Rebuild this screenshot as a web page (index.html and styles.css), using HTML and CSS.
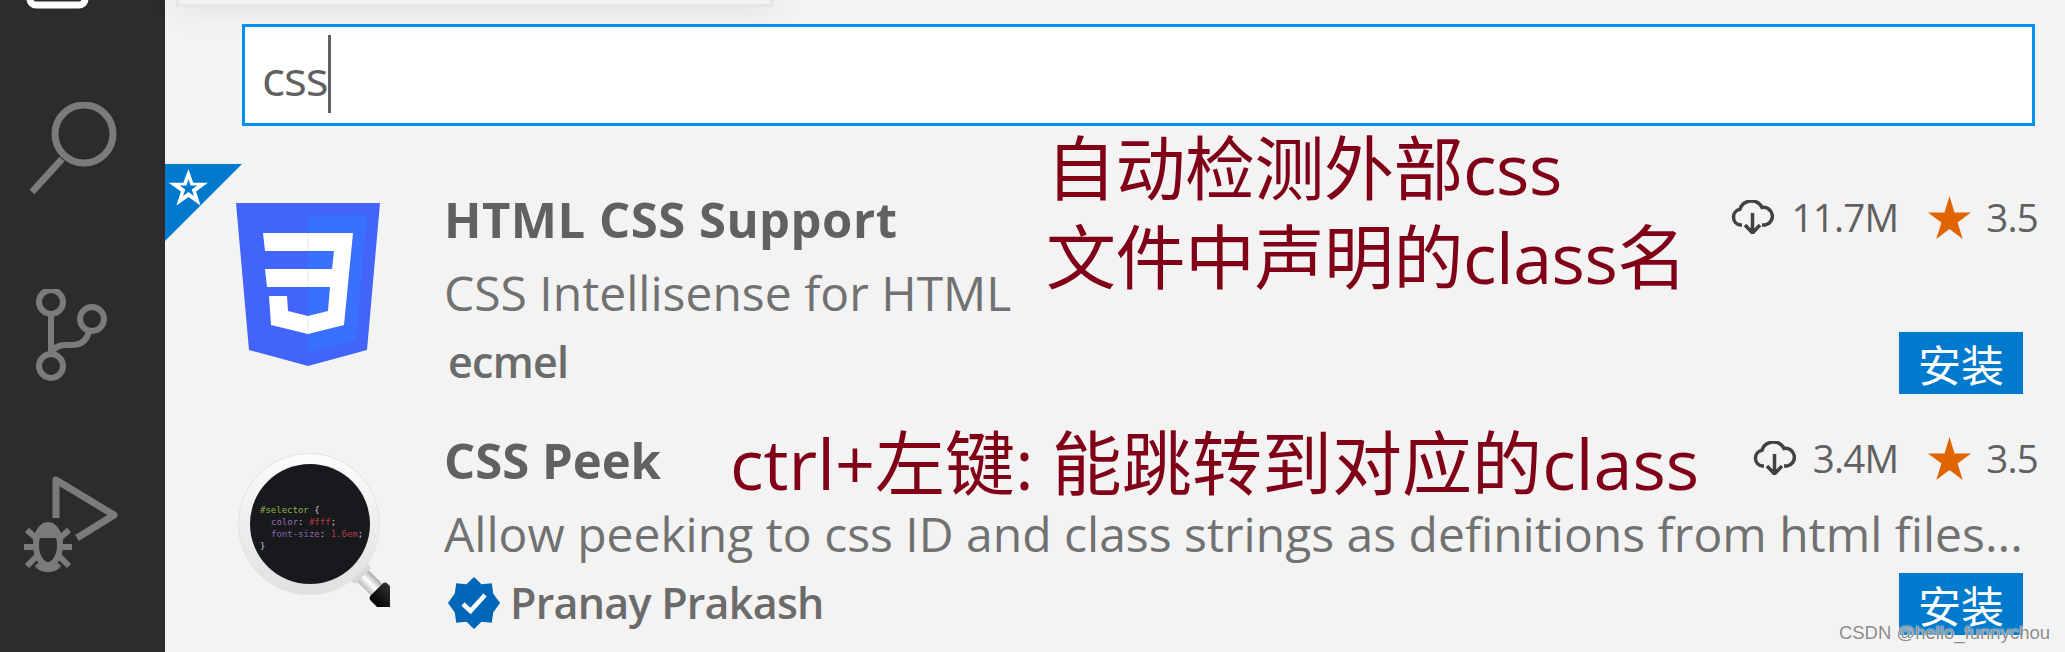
FILE: index.html
```html
<!DOCTYPE html>
<html lang="zh-CN">
<head>
<meta charset="utf-8">
<title>Extensions</title>
<link rel="stylesheet" href="styles.css">
</head>
<body>
<div class="app">
  <nav class="activity">
    <svg class="act" viewBox="0 0 165 187"><rect x="30" y="50" width="55" height="40" rx="6" class="white"/></svg>
    <svg class="act" viewBox="0 0 165 187">
      <circle cx="84" cy="32" r="29" class="ln"/>
      <path d="M62 57 32 90" class="ln"/>
    </svg>
    <svg class="act" viewBox="0 0 165 187">
      <g transform="translate(0 -289)" class="ln thin">
        <circle cx="51" cy="302" r="12"/>
        <circle cx="92" cy="319" r="12"/>
        <circle cx="51" cy="366" r="12"/>
        <path d="M51 314v40M89 331c-2 9-8 14-17 14h-7c-6 0-11 3-14 8"/>
      </g>
    </svg>
    <svg class="act" viewBox="0 0 165 187">
      <g transform="translate(0 -476)" class="ln">
        <path d="M56 518V480l58 35-37 23" stroke-linejoin="round"/>
        <g class="thin">
          <path d="M37 564a14 14 0 0 0 22 0M38 535a12 12 0 0 1 20 0"/>
          <ellipse cx="48" cy="545" rx="12" ry="20"/>
          <path d="M36 535h24M27 530l9 8M69 530l-9 8M24 547h12M60 547h12M27 566l10-10M69 566l-10-10"/>
        </g>
      </g>
    </svg>
  </nav>

  <main class="panel">
    <div class="flyout"></div>
    <div class="search"><span class="query">css</span><span class="caret"></span></div>

    <section class="row">
      <div class="badge">
        <svg viewBox="0 0 77 77" class="badge-svg">
          <path d="M0 0H77L0 77Z" fill="#007acc"/>
          <path d="M23.500 5l4.700 13.800 14.700 0-11.800 8.700 4.400 14-12-8.500-12 8.500 4.400-14L3.600 18.800l14.700 0z" fill="#fff"/>
          <path d="M23.500 15l2 6.500h6.800l-5.500 4 2.100 6.500-5.400-4-5.400 4 2.100-6.500-5.500-4h6.800z" fill="#007acc"/>
        </svg>
      </div>
      <div class="logo">
        <svg viewBox="0 0 144 163" class="logo-css">
          <path d="M0 0H144L131 147 72 163 13 147Z" fill="#4264fb"/>
          <path d="M72 12H131L120 137 72 150Z" fill="#3a70ff"/>
          <path d="M27 30H117L108 122 72 131 35 122 33 93H51L52 108 72 113 92 108 94 84H31L29 66H96L98 48H29Z" fill="#fff"/>
          <path d="M72 30V48M72 66V84M72 113V131" stroke="#dfe6f5" stroke-width="1"/>
        </svg>
      </div>
      <div class="body">
        <div class="head">
          <span class="name name-a">HTML CSS Support</span>
          <span class="stats">
            <svg class="cloud" viewBox="0 0 43 34"><path d="M11 25H9.500A8 8 0 0 1 9 9.200 12 12 0 0 1 31 7.500 8.500 8.500 0 0 1 34 25H31M21.500 13V32M14 25l7.500 8 7.500-8"/></svg>
            <span class="count">11.7M</span>
            <svg class="star" viewBox="0 0 43 43"><path d="M21.500 0l5 16.400h16.500L29.600 26.500l5.100 16.500-13.200-10.100L8.300 43l5.100-16.500L0 16.400h16.500z"/></svg>
            <span class="rate">3.5</span>
          </span>
        </div>
        <div class="desc">CSS Intellisense for HTML</div>
        <div class="foot">
          <span class="author author-a">ecmel</span>
          <button class="install">安装</button>
        </div>
      </div>
    </section>

    <section class="row">
      <div class="logo">
        <svg viewBox="0 0 152 154" class="logo-peek">
          <defs>
            <linearGradient id="rim" x1="0" y1="0" x2="0" y2="1">
              <stop offset="0" stop-color="#fcfcfc"/><stop offset="1" stop-color="#e0e0e0"/>
            </linearGradient>
            <linearGradient id="neck" x1="0" y1="0" x2="1" y2="0">
              <stop offset="0" stop-color="#bbb"/><stop offset=".5" stop-color="#fff"/><stop offset="1" stop-color="#aaa"/>
            </linearGradient>
            <linearGradient id="grip" x1="0" y1="0" x2="1" y2="0">
              <stop offset="0" stop-color="#000"/><stop offset="1" stop-color="#333"/>
            </linearGradient>
          </defs>
          <g transform="translate(123 121) rotate(-45)">
            <rect x="-8" y="0" width="16" height="24" fill="url(#neck)"/>
            <rect x="-12" y="-3" width="24" height="6" rx="3" fill="#d8d8d8"/>
            <rect x="-12" y="22" width="24" height="50" rx="4" fill="url(#grip)"/>
          </g>
          <circle cx="71" cy="71" r="70.500" fill="url(#rim)" stroke="#e2e2e2"/>
          <circle cx="72" cy="71" r="60" fill="#17191c"/>
          <g class="code">
            <text x="22" y="60" fill="#8fb342">#selector <tspan fill="#ccc">{</tspan></text>
            <text x="33" y="72" fill="#9a70bb">color<tspan fill="#ccc">:</tspan> <tspan fill="#b8363f">#fff</tspan><tspan fill="#ccc">;</tspan></text>
            <text x="33" y="84" fill="#8a66ad">font-size<tspan fill="#ccc">:</tspan> <tspan fill="#b8363f">1.6em</tspan><tspan fill="#ccc">;</tspan></text>
            <text x="22" y="96" fill="#ccc">}</text>
          </g>
        </svg>
      </div>
      <div class="body">
        <div class="head">
          <span class="name">CSS Peek</span>
          <span class="stats">
            <svg class="cloud" viewBox="0 0 43 34"><path d="M11 25H9.500A8 8 0 0 1 9 9.200 12 12 0 0 1 31 7.500 8.500 8.500 0 0 1 34 25H31M21.500 13V32M14 25l7.500 8 7.500-8"/></svg>
            <span class="count">3.4M</span>
            <svg class="star" viewBox="0 0 43 43"><path d="M21.500 0l5 16.400h16.500L29.600 26.500l5.100 16.500-13.200-10.100L8.300 43l5.100-16.500L0 16.400h16.500z"/></svg>
            <span class="rate">3.5</span>
          </span>
        </div>
        <div class="desc">Allow peeking to css ID and class strings as definitions from html files...</div>
        <div class="foot">
          <span class="author author-b">
            <svg class="verified" viewBox="0 0 52 52">
              <path d="M26 0l7.500 7.200 10.300-.9 1.400 10.300L52 26l-6.800 9.400-1.400 10.300-10.300-.9L26 52l-7.500-7.200-10.300.9-1.400-10.300L0 26l6.800-9.400L8.200 6.300l10.300.9z" fill="#0067b8"/>
              <path d="M15 27l7.500 7L37 18" fill="none" stroke="#fff" stroke-width="4.500"/>
            </svg>
            Pranay Prakash
          </span>
          <button class="install">安装</button>
        </div>
      </div>
    </section>

    <p class="note note-a">自动检测外部css<br>文件中声明的class名</p>
    <p class="note note-b">ctrl+左键: 能跳转到对应的class</p>
  </main>
  <span class="mark">CSDN @hello_funnychou</span>
</div>
</body>
</html>
```
FILE: styles.css
```css
* { box-sizing: border-box; }
html, body { margin: 0; height: 100%; background: #f3f3f3; overflow: hidden; }
body { font-family: "Open Sans", "Noto Sans CJK SC", sans-serif; color: #616161; }

.app { position: relative; display: flex; height: 652px; overflow: hidden; }

.activity { flex: none; width: 165px; height: 652px; background: #2c2c2c; display: flex; flex-direction: column; margin: 0; overflow: hidden; }
.act { flex: none; display: block; width: 165px; height: 187px; }
.act:first-child { margin-top: -85px; }
.ln, .ln * { fill: none; stroke: #7b7b7b; stroke-width: 7; }
.thin, .thin * { stroke-width: 6; }
.white { fill: none; stroke: #fff; stroke-width: 7; }

.panel { position: relative; flex: 1; min-width: 0; }

.flyout { position: absolute; left: 11px; top: -20px; width: 597px; height: 27px; background: #f3f3f3; border: 3px solid #e6e6e6; box-shadow: 0 0 34px rgba(0, 0, 0, .09); z-index: 2; }

.search { display: flex; align-items: center; height: 102px; margin: 24px 30px 0 77px; padding: 0 0 2px 17px; background: #fff; border: 3px solid #0090f1; }
.query { font-size: 48px; line-height: 78px; letter-spacing: -1px; color: #616161; margin-top: 7px; }
.caret { width: 3px; height: 78px; margin-left: 0; background: #616161; }

.row { position: relative; display: flex; height: 241px; padding-right: 27px; }
.search + .row { margin-top: 37px; }

.badge { position: absolute; left: 0; top: 1px; width: 77px; height: 77px; }
.badge-svg { display: block; width: 77px; height: 77px; }

.logo { flex: none; width: 279px; padding: 40px 0 0 71px; }
.logo-css { display: block; width: 144px; height: 163px; }
.logo-peek { display: block; width: 152px; height: 154px; margin: 9px 0 0 2px; }
.code { font-family: "DejaVu Sans Mono", monospace; font-size: 9px; }

.body { flex: 1; min-width: 0; padding-top: 20px; }
.head { display: flex; justify-content: space-between; align-items: center; height: 73px; }
.name { font-size: 49px; font-weight: 700; line-height: 73px; color: #616161; }
.name-a { letter-spacing: .5px; }

.stats { display: flex; align-items: center; font-size: 38.500px; line-height: 48px; margin-top: -5px; }
.cloud { flex: none; width: 43px; height: 34px; margin-right: 17px; fill: none; stroke: #424242; stroke-width: 3.500; }
.count { letter-spacing: -.8px; }
.star { flex: none; width: 43px; height: 43px; margin: 0 15px 0 30px; fill: #e06400; }
.rate { letter-spacing: -.8px; }

.desc { height: 73px; margin-right: 15px; font-size: 48px; line-height: 73px; color: #717171; white-space: nowrap; overflow: hidden; }

.foot { display: flex; justify-content: space-between; align-items: flex-start; margin: 3px 15px 0 0; }
.author { display: flex; align-items: center; margin-top: -1px; font-size: 43px; font-weight: 600; line-height: 62px; letter-spacing: -.75px; color: #6b6b6b; }
.author-a { padding-left: 4px; }
.verified { flex: none; width: 52px; height: 52px; margin: 0 10px 0 4px; }

.install { width: 124px; height: 62px; padding: 0; border: 0; background: #007acc; color: #fff; font-family: "Noto Sans CJK SC", sans-serif; font-size: 43px; line-height: 62px; }

.note { position: absolute; margin: 0; font-size: 70px; color: #800018; white-space: nowrap; }
.note-a { left: 881px; top: 124px; line-height: 89px; letter-spacing: -.5px; }
.note-b { left: 565px; top: 419px; line-height: 89px; letter-spacing: .05px; }

.mark { position: absolute; right: 15px; bottom: 8px; font-family: "Liberation Sans", sans-serif; font-size: 18.500px; line-height: 22px; color: #8a8a8a; text-shadow: 0 0 2px #fff, 0 0 1px #fff; }
```
